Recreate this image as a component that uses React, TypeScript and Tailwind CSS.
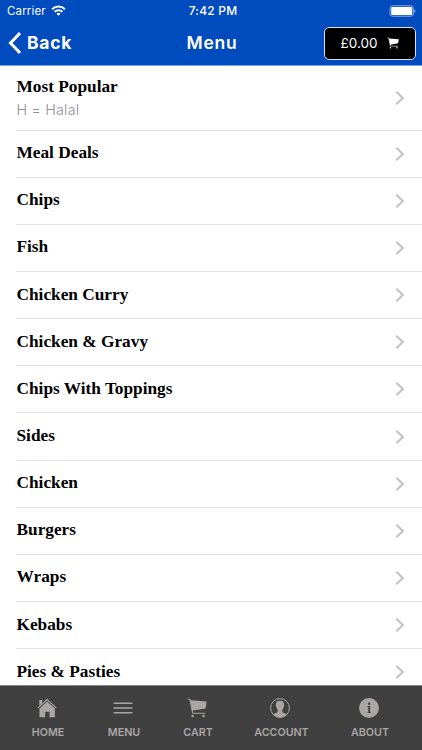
import React from 'react';

interface Category {
  name: string;
  note?: string;
}

const categories: Category[] = [
  { name: 'Most Popular', note: 'H = Halal' },
  { name: 'Meal Deals' },
  { name: 'Chips' },
  { name: 'Fish' },
  { name: 'Chicken Curry' },
  { name: 'Chicken & Gravy' },
  { name: 'Chips With Toppings' },
  { name: 'Sides' },
  { name: 'Chicken' },
  { name: 'Burgers' },
  { name: 'Wraps' },
  { name: 'Kebabs' },
  { name: 'Pies & Pasties' },
];

const CartIcon = ({ className }: { className: string }) => (
  <svg viewBox="0 0 20 20" className={className} fill="currentColor">
    <path d="M3.2 2.3 19.6 3.6 18.6 10.4 5 12.8z" />
    <path d="M.8 1.2h2.1l2.8 14.1h12.6" fill="none" stroke="currentColor" strokeWidth="1" />
    <circle cx="5.6" cy="18" r="1.2" />
    <circle cx="16.6" cy="18" r="1.2" />
  </svg>
);

const HomeIcon = () => (
  <svg viewBox="0 0 20 20" className="h-5 w-5" fill="currentColor">
    <path d="M2.3 2h2.9v3.2L2.3 7.8z" />
    <path d="M1 9.8 10.1 1.6 19.2 9.8" fill="none" stroke="currentColor" strokeWidth="1.1" />
    <path d="M10.1 3.4 17.9 10.4v8.8h-5.4v-5.4H8.2v5.4H2.5v-8.8z" />
  </svg>
);

const MenuIcon = () => (
  <svg viewBox="0 0 20 20" className="h-5 w-5" stroke="currentColor" strokeWidth="1.5">
    <path d="M.7 5.2h18.8M.7 10h18.8M.7 14.8h18.8" />
  </svg>
);

const AccountIcon = () => (
  <svg viewBox="0 0 20 20" className="h-5 w-5">
    <circle cx="10" cy="10" r="9.4" fill="none" stroke="currentColor" strokeWidth="1" />
    <path
      d="M10 2.8c-3 0-4.3 1.5-4 4.1-.5.3-.2 1.8.4 2.1.3 1.4.7 2.1 1.2 2.7v2.4c-.5 1.2-3.4 1.3-4.8 2.2A9.2 9.2 0 0 0 10 19.4a9.2 9.2 0 0 0 7.2-3.1c-1.4-.9-4.3-1-4.8-2.2v-2.4c.5-.6.9-1.3 1.2-2.7.6-.3.9-1.8.4-2.1.3-2.6-1-4.1-4-4.1z"
      fill="currentColor"
    />
  </svg>
);

const AboutIcon = () => (
  <svg viewBox="0 0 20 20" className="h-5 w-5">
    <circle cx="10" cy="10" r="10" fill="currentColor" />
    <circle cx="10.1" cy="5.8" r="1.2" fill="#404040" />
    <path d="M8.4 8.1h2.7v6.1h.8v.8H8.4v-.8h.9V8.9h-.9z" fill="#404040" />
  </svg>
);

const tabs = [
  { label: 'HOME', icon: <HomeIcon />, width: 'w-[76px]' },
  { label: 'MENU', icon: <MenuIcon />, width: 'w-[76px]' },
  { label: 'CART', icon: <CartIcon className="h-5 w-5" />, width: 'w-[72px]' },
  { label: 'ACCOUNT', icon: <AccountIcon />, width: 'w-[95px]' },
  { label: 'ABOUT', icon: <AboutIcon />, width: 'w-[82px]' },
];

const App: React.FC = () => {
  return (
    <div className="flex h-[750px] w-[422px] flex-col overflow-hidden bg-white font-['Inter',sans-serif]">
      {/* Header */}
      <header className="h-[66px] shrink-0 border-b border-[#799fe0] bg-[#004bbd] text-white">
        <div className="grid h-[22px] grid-cols-3 items-center pr-1.5 pl-[7px] text-[12px] leading-none">
          <div className="flex items-center gap-[5px]">
            <span className="pt-px text-[11.5px] tracking-[0.15px]">Carrier</span>
            <svg viewBox="0 0 16 12" className="mb-px h-[11px] w-[15px]" fill="none" stroke="currentColor" strokeWidth="2.2">
              <path d="M1 4.6a10 10 0 0 1 14 0M3.7 7.5a6.1 6.1 0 0 1 8.6 0" />
              <path d="M8 11.8 5.8 9.5a3.2 3.2 0 0 1 4.4 0z" fill="currentColor" stroke="none" />
            </svg>
          </div>
          <span className="pl-[3px] text-center font-medium tracking-[0.2px]">7:42 PM</span>
          <svg viewBox="0 0 27 12" className="mb-px h-3 w-[27px] justify-self-end">
            <rect x="1" y=".8" width="23.4" height="10.4" rx="2.5" fill="none" stroke="#8badea" />
            <rect x="2.2" y="2.1" width="21" height="7.8" rx="1.2" fill="white" />
            <path d="M25.5 4v4c1.4-.5 1.4-3.5 0-4z" fill="#8badea" />
          </svg>
        </div>
        <div className="grid h-[43px] grid-cols-3 items-center pr-1.5 pl-2">
          <button className="mb-0.5 flex items-center gap-1.5 text-left">
            <svg viewBox="0 0 13 22" className="h-[22px] w-[13px]" fill="none" stroke="currentColor" strokeWidth="3">
              <path d="M12 1 2.5 11 12 21" />
            </svg>
            <span className="text-[17.5px] leading-none font-bold tracking-[0.7px]">Back</span>
          </button>
          <h1 className="mb-0.5 text-center text-[17.5px] leading-none font-semibold tracking-[0.8px]">Menu</h1>
          <button className="flex h-[33px] w-[92px] items-center justify-self-end rounded-[5px] border border-[#d5e2f5] bg-black pl-[15px]">
            <span className="w-[38px] text-[13.5px] leading-none whitespace-nowrap">£0.00</span>
            <CartIcon className="mb-0.5 ml-[9px] h-3 w-3" />
          </button>
        </div>
      </header>

      {/* Categories */}
      <main className="min-h-0 flex-1 overflow-hidden pl-4">
        {categories.map((category) => (
          <div
            key={category.name}
            className={
              category.note
                ? 'flex h-[64.5px] items-center justify-between border-b border-[#e4e4e6] pr-[17px]'
                : 'flex h-[47.17px] items-center justify-between border-b border-[#e4e4e6] pr-[17px]'
            }
          >
            <div className={category.note ? 'pt-0.5 pl-[0.5px]' : 'pb-px pl-[0.5px]'}>
              <h2 className="font-['Liberation_Serif',serif] text-[17.3px] leading-[22px] font-bold text-black">
                {category.name}
              </h2>
              {category.note && (
                <p className="pt-px text-[14.3px] leading-[22px] font-light tracking-[0.2px] text-[#8e8e93]">
                  {category.note}
                </p>
              )}
            </div>
            <svg viewBox="0 0 10 14" className="h-[14px] w-[10px]" fill="none" stroke="#c4c4c8" strokeWidth="2.2">
              <path d="M1.3.8 7.8 7l-6.5 6.2" />
            </svg>
          </div>
        ))}
      </main>

      {/* Tab bar */}
      <nav className="flex h-[65px] shrink-0 border-t border-[#858585] bg-[#404040] pl-2.5 text-[#aaa6a6]">
        {tabs.map((tab) => (
          <div key={tab.label} className={`flex flex-col items-center pt-3 ${tab.width}`}>
            <div className="mr-[3px]">{tab.icon}</div>
            <span className="mt-2 text-[10.7px] leading-[14px] font-semibold">{tab.label}</span>
          </div>
        ))}
      </nav>
    </div>
  );
};

export default App;
